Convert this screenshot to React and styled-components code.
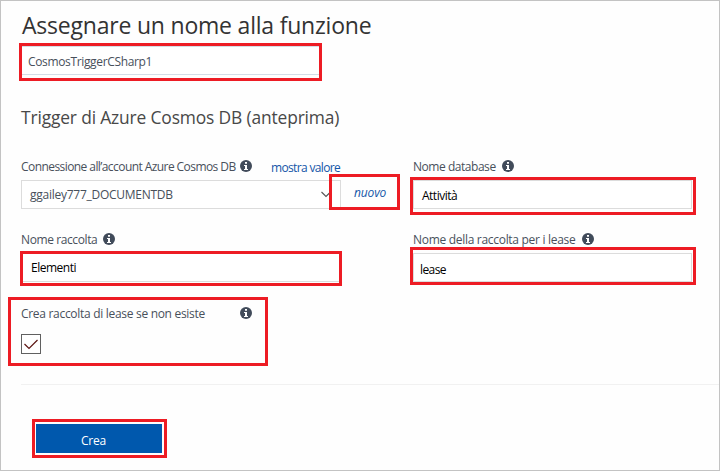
import React from 'react';
import styled, { createGlobalStyle } from 'styled-components';

const GlobalStyle = createGlobalStyle`
  * { box-sizing: border-box; }
  body { margin: 0; background: #fff; }
`;

const Page = styled.main`
  width: 720px;
  height: 471px;
  display: flex;
  flex-direction: column;
  align-items: flex-start;
  padding-left: 20px;
  border: 1px solid #c3c3c3;
  background: #fefefe;
  overflow: hidden;
  color: #48505b;
  font-family: 'Open Sans', 'Noto Sans', sans-serif;
  font-size: 12px;
  white-space: nowrap;
`;

const Title = styled.h1`
  height: 45px;
  margin: 0;
  padding-left: 1px;
  color: #333;
  font-size: 23px;
  font-weight: 400;
  line-height: 49px;
  letter-spacing: -0.21px;
`;

const Subtitle = styled.h2`
  height: 80px;
  margin: 0;
  color: #484848;
  font-size: 17.4px;
  font-weight: 400;
  line-height: 84px;
  letter-spacing: -0.15px;
`;

const Fields = styled.div`
  display: grid;
  grid-template-columns: 320px 72px 279px;
  grid-template-rows: 54px 54px;
  row-gap: 19px;
`;

const Field = styled.div`
  position: relative;
  display: flex;
  flex-direction: column;
  grid-column: ${(p) => p.$column || 'auto'};
`;

const LabelRow = styled.div`
  display: flex;
  align-items: flex-start;
  height: 25px;
`;

const Label = styled.label`
  width: ${(p) => (p.$width ? `${p.$width}px` : 'auto')};
  flex: none;
  line-height: 24px;
  letter-spacing: ${(p) => p.$track ?? -0.3}px;
`;

const Link = styled.a`
  color: #1456a8;
  margin-left: 19px;
  line-height: 26px;
  letter-spacing: -0.65px;
`;

const Box = styled.div`
  position: relative;
  display: flex;
  align-items: center;
  width: ${(p) => (p.$width ? `${p.$width}px` : '100%')};
  height: 29px;
  padding-left: ${(p) => p.$pad ?? 9}px;
  padding-top: ${(p) => p.$drop || 0}px;
  border: 1px solid ${(p) => p.$line || '#dcdcdc'};
  background: #fff;
  color: ${(p) => p.$ink || '#000'};
  letter-spacing: ${(p) => p.$track || 0}px;
`;

const Chevron = styled.svg`
  margin-left: auto;
  margin-right: 9px;
  width: 10px;
  height: 7px;
`;

const NewLink = styled.a`
  position: relative;
  align-self: end;
  height: 29px;
  padding-left: 13px;
  color: #1456a8;
  font-style: italic;
  line-height: 26px;
  letter-spacing: -0.15px;
`;

const Highlight = styled.span`
  position: absolute;
  top: ${(p) => p.$top}px;
  left: ${(p) => p.$left}px;
  width: ${(p) => p.$width}px;
  height: ${(p) => p.$height}px;
  border: 3px solid #ed1c24;
  pointer-events: none;
`;

const CheckGroup = styled.div`
  position: relative;
  display: flex;
  flex-direction: column;
  height: 82px;
  margin-top: 20px;
`;

const CheckRow = styled.div`
  display: flex;
  height: 32px;
`;

const CheckBox = styled.span`
  display: grid;
  place-items: center;
  width: 20px;
  height: 20px;
  border: 1px solid #606060;
  background: #fff;
`;

const Divider = styled.hr`
  width: 100%;
  height: 1px;
  margin: 0;
  border: 0;
  background: #f1f1f1;
`;

const CreateButton = styled.button`
  position: relative;
  width: 126px;
  height: 29px;
  margin: 39px 0 0 15px;
  padding: 3px 0 0 45px;
  border: 0;
  background: #0058ad;
  color: #fff;
  font: inherit;
  text-align: left;
  letter-spacing: -0.2px;
`;

const InfoSvg = styled.svg`
  flex: none;
  width: 12px;
  height: 12px;
  margin-top: 5px;
`;

const Info = () => (
  <InfoSvg viewBox="0 0 12 12">
    <circle cx="6" cy="6" r="6" fill="#414b5a" />
    <path d="M5 2h2v1.7H5zM4 5h3v4h1v1H4V9h1V6H4z" fill="#fff" />
  </InfoSvg>
);

export default function App() {
  return (
    <Page>
      <GlobalStyle />
      <Title>Assegnare un nome alla funzione</Title>
      <Box $width={300} $pad={6} $drop={2} $line="#d3dde6" $ink="#48505b" $track={-0.35}>
        CosmosTriggerCSharp1
        <Highlight $top={-4} $left={-3} $width={303} $height={38} />
      </Box>
      <Subtitle>Trigger di Azure Cosmos DB (anteprima)</Subtitle>
      <Fields>
        <Field>
          <LabelRow>
            <Label $width={219} $track={-0.57}>Connessione all’account Azure Cosmos DB</Label>
            <Info />
            <Link>mostra valore</Link>
          </LabelRow>
          <Box $pad={8} $ink="#48505b" $track={-0.26}>
            ggailey777_DOCUMENTDB
            <Chevron viewBox="0 0 10 7">
              <path d="M.5 1l4.5 4.5L9.5 1" fill="none" stroke="#555" strokeWidth="1.1" />
            </Chevron>
          </Box>
        </Field>
        <NewLink>
          nuovo
          <Highlight $top={-6} $left={-12} $width={71} $height={36} />
        </NewLink>
        <Field>
          <LabelRow>
            <Label $width={89} $track={-0.46}>Nome database</Label>
            <Info />
          </LabelRow>
          <Box $pad={8} $drop={2} $track={-0.5}>
            Attività
            <Highlight $top={-4} $left={-4} $width={286} $height={38} />
          </Box>
        </Field>
        <Field>
          <LabelRow>
            <Label $width={82} $track={-0.4}>Nome raccolta</Label>
            <Info />
          </LabelRow>
          <Box $track={-0.5}>
            Elementi
            <Highlight $top={-3} $left={-2} $width={322} $height={35} />
          </Box>
        </Field>
        <Field $column="3">
          <LabelRow>
            <Label $width={169}>Nome della raccolta per i lease</Label>
            <Info />
          </LabelRow>
          <Box $pad={6} $drop={3} $track={-0.6}>
            lease
            <Highlight $top={-7} $left={-4} $width={286} $height={38} />
          </Box>
        </Field>
      </Fields>
      <CheckGroup>
        <CheckRow>
          <Label $width={219}>Crea raccolta di lease se non esiste</Label>
          <Info />
        </CheckRow>
        <CheckBox>
          <svg width="16" height="14" viewBox="0 0 16 14">
            <path d="M1.5 7l4.5 4.5L14.5 3" fill="none" stroke="#5c1512" strokeWidth="1.2" />
          </svg>
        </CheckBox>
        <Highlight $top={-5} $left={-13} $width={260} $height={69} />
      </CheckGroup>
      <Divider />
      <CreateButton>
        Crea
        <Highlight $top={-5} $left={-4} $width={135} $height={39} />
      </CreateButton>
    </Page>
  );
}
